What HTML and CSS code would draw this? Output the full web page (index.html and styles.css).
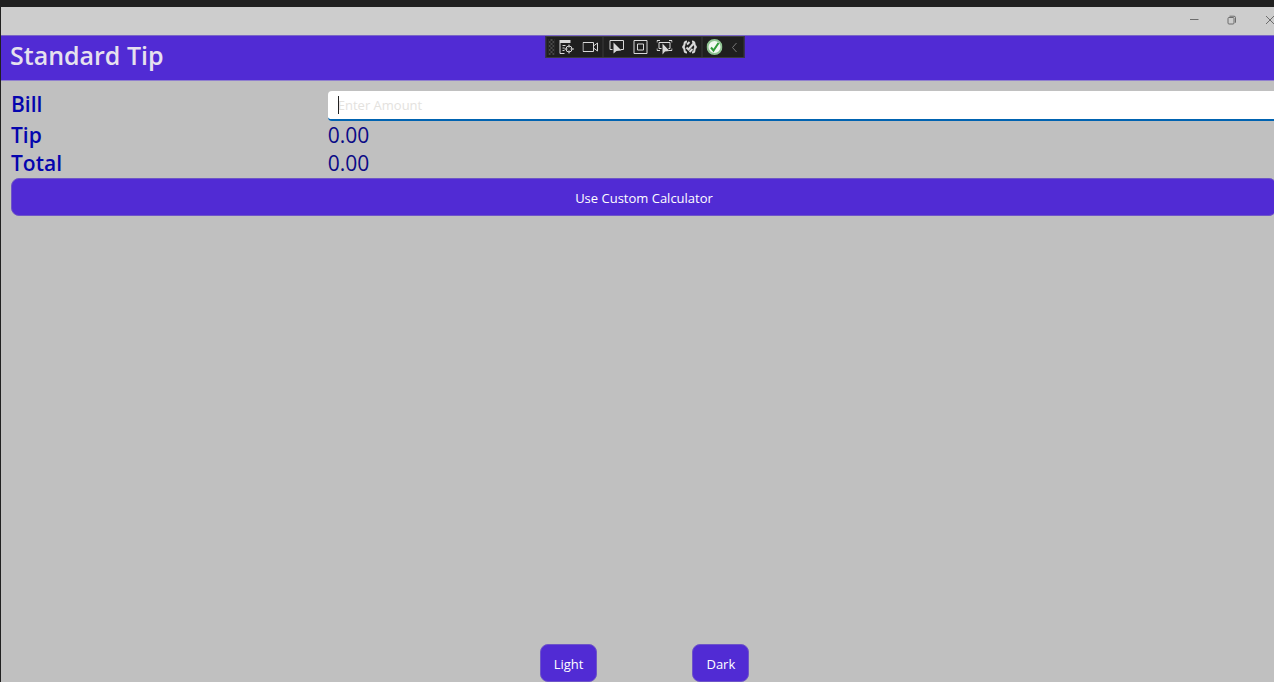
FILE: index.html
```html
<!DOCTYPE html>
<html lang="en">
<head>
<meta charset="utf-8">
<title>Standard Tip</title>
<link rel="stylesheet" href="styles.css">
</head>
<body>
<div class="window">
  <header class="titlebar">
    <button class="win-btn" aria-label="Minimize"><svg width="10" height="10" viewBox="0 0 10 10"><path d="M1 4.500h8.500"/></svg></button>
    <button class="win-btn" aria-label="Restore"><svg width="10" height="10" viewBox="0 0 10 10"><rect x="1" y="2.500" width="6" height="6.500" rx="1"/><path d="M2.500 1.200h4.500q1.500 0 1.500 1.500v5"/></svg></button>
    <button class="win-btn" aria-label="Close"><svg width="10" height="10" viewBox="0 0 10 10"><path d="M1 1l8 8M9 1l-8 8"/></svg></button>
  </header>

  <div class="navbar"><h1 class="title">Standard Tip</h1></div>

  <div class="debugbar" role="toolbar" aria-label="Debug tools">
    <span class="grip"></span>
    <button class="tool" aria-label="Live visual tree"><svg width="16" height="16" viewBox="0 0 16 16"><path class="fill" d="M1 1h11v3H1z"/><path d="M1.500 4v10.500H6M4 6.500h3M4 9h2M4 11.500h2"/><circle cx="10.500" cy="10" r="3"/><path d="M10.500 5.500v3M10.500 11.500v3M6 10h3M12 10h3.500"/></svg></button>
    <button class="tool" aria-label="Record"><svg width="16" height="16" viewBox="0 0 16 16"><path d="M.5 3.500h10.500v9H.5zM11 7l4-3v8l-4-3z"/></svg></button>
    <span class="rule"></span>
    <button class="tool" aria-label="Select element"><svg width="16" height="16" viewBox="0 0 16 16"><path d="M4 10.500H1.500v-9h13.500v9h-3"/><path class="fill" d="M5 3.500v11l3-2.500 5-.5z"/></svg></button>
    <button class="tool" aria-label="Layout adorners"><svg width="16" height="16" viewBox="0 0 16 16"><path d="M1.500 1.500h13v13h-13zM5 5h6v6H5z"/></svg></button>
    <button class="tool" aria-label="Track focus"><svg width="16" height="16" viewBox="0 0 16 16"><path d="M5 9.500H2.500v-6h11v6H12M.5 3.500v-2h3M12.500 1.500h3v2M.5 9.500v2h3M15.500 9.500v2h-3"/><path class="fill" d="M6 4.500v11l2.500-3 4.500-.5z"/></svg></button>
    <button class="tool" aria-label="Binding failures"><svg width="16" height="16" viewBox="0 0 16 16"><path class="bold" d="M5.500 2.500Q3 2.500 3 5t-2 3q2 .5 2 3t2.500 2.500M10.500 2.500Q13 2.500 13 5t2 3q-2 .5-2 3t-2.500 2.500M5 8.500l2 2 5-6M5.500 5.500L8 3M8 13l3-3"/></svg></button>
    <span class="rule"></span>
    <button class="tool" aria-label="Hot reload"><svg width="16" height="16" viewBox="0 0 16 16"><circle class="ok" cx="8" cy="8" r="7"/><path class="tick" d="M4.500 8.500l2.500 3 5-7.500"/></svg></button>
    <button class="tool last" aria-label="Collapse"><svg width="16" height="16" viewBox="0 0 16 16"><path class="dim" d="M10 4L6 8.500l4 4.500"/></svg></button>
  </div>

  <main class="page">
    <div class="form">
      <label class="label" for="bill">Bill</label>
      <div class="entry-wrap"><input class="entry" id="bill" type="text" placeholder="Enter Amount"><span class="caret"></span></div>
      <span class="label">Tip</span><output class="value">0.00</output>
      <span class="label">Total</span><output class="value">0.00</output>
    </div>
    <button class="btn wide">Use Custom Calculator</button>
    <div class="themes">
      <button class="btn">Light</button>
      <button class="btn">Dark</button>
    </div>
  </main>
</div>
</body>
</html>
```
FILE: styles.css
```css
* { box-sizing: border-box; }
body {
  margin: 0;
  background: #c0c0c0;
  font-family: "Open Sans", "Noto Sans", sans-serif;
  overflow: hidden;
}
button {
  font: inherit;
  color: inherit;
  border: 0;
  padding: 0;
  margin: 0;
  background: none;
}
svg { display: block; flex: none; fill: none; stroke: currentColor; }
.window {
  position: relative;
  display: flex;
  flex-direction: column;
  min-height: 100vh;
  border-top: 7px solid #202020;
  border-left: 1px solid #202020;
}
.titlebar {
  display: flex;
  justify-content: flex-end;
  height: 28px;
  background: #cdcdcd;
  color: #6c6c6c;
  margin-right: -15px;
}
.win-btn {
  display: flex;
  align-items: center;
  justify-content: center;
  width: 38px;
  height: 26px;
}
.navbar {
  height: 46px;
  padding: 0 9px;
  background: #512bd4;
  border-top: 1px solid #7a66c6;
  border-bottom: 1px solid #9180cf;
}
.title {
  margin: 0;
  font-size: 25px;
  line-height: 38px;
  font-weight: 600;
  color: #e6e1ee;
}
.debugbar {
  position: absolute;
  top: 29px;
  left: 50%;
  transform: translateX(-50%);
  margin-left: 7px;
  display: flex;
  align-items: center;
  width: 199px;
  height: 22px;
  padding-left: 2px;
  background: #1f1f1f;
  border: 1px solid #3b3b3b;
  color: #d8d8d8;
}
.grip {
  width: 6px;
  height: 16px;
  background: repeating-conic-gradient(#484848 0 25%, #1f1f1f 0 50%) 0 0 / 4px 4px;
}
.tool {
  display: flex;
  flex: 1;
  justify-content: center;
}
.last { flex: 0 0 14px; }
.rule { width: 1px; height: 20px; background: #3b3b3b; }
.fill { fill: currentColor; stroke: none; }
.bold { stroke-width: 2; }
.ok { fill: #f2f8f2; stroke: #8fc492; stroke-width: 2; }
.tick { stroke: #2f9a38; stroke-width: 2; }
.dim { stroke: #777; }
.page {
  flex: 1;
  display: flex;
  flex-direction: column;
  padding: 10px 0 0 10px;
  margin-right: -4px;
}
.form {
  display: grid;
  grid-template-columns: 1fr 3fr;
  grid-template-rows: 31px 28px 28px;
  font-size: 21px;
  line-height: 27px;
}
.label { color: #0505ae; font-weight: 600; }
.value { color: #0a0a86; }
.entry-wrap { position: relative; }
.entry {
  width: 100%;
  height: 30px;
  padding: 0 10px;
  border: 0;
  border-bottom: 2px solid #0063b1;
  border-radius: 4px;
  background: #fff;
  color: #222;
  font: 13px/20px "Open Sans", sans-serif;
  outline: 0;
  display: block;
}
.entry::placeholder { color: #e4e2de; opacity: 1; }
.caret {
  position: absolute;
  left: 10px;
  top: 5px;
  width: 1px;
  height: 18px;
  background: #222;
}
.btn {
  height: 38px;
  padding: 2px 13px 0;
  border: 1px solid #6e55c8;
  border-radius: 8px;
  background: #512bd4;
  color: #fff;
  font-size: 13px;
  line-height: 20px;
}
.wide { margin-right: 1px; }
.themes {
  display: flex;
  justify-content: center;
  gap: 95px;
  margin-top: auto;
}
```
